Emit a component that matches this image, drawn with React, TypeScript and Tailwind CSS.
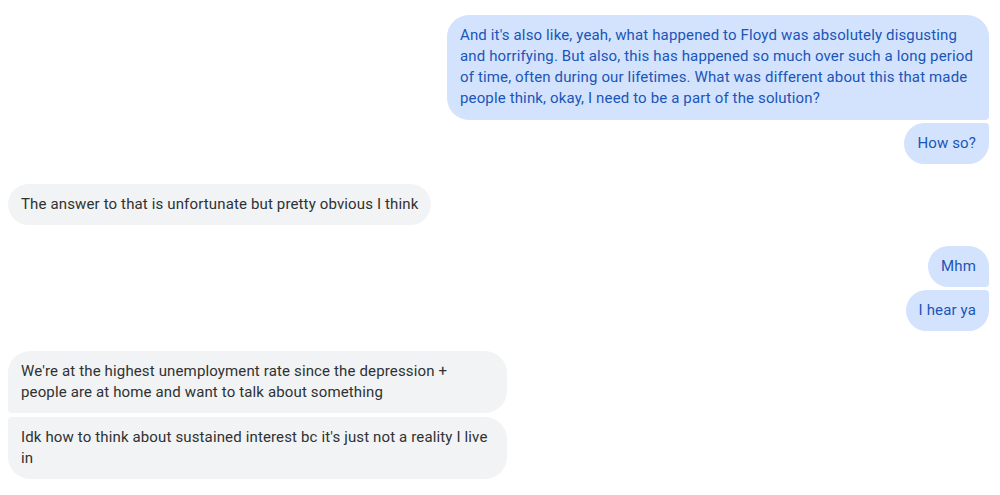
import React from 'react';

type Msg = { text: string; cls: string };

const blue = 'bg-[#d3e3fd] text-[#1a55b8]';
const gray = 'bg-[#f1f3f4] text-[#2f3133]';

const Bubble: React.FC<{ m: Msg; color: string; max: string }> = ({ m, color, max }) => (
    <div className={`w-fit px-[13px] py-[10px] text-[15px] leading-[21px] tracking-[0.14px] ${color} ${max} ${m.cls}`}>
        {m.text}
    </div>
);

const App: React.FC = () => {
    return (
        <div
            className="w-[1000px] h-[495px] bg-white pl-2 pr-[11px] pt-[15px] flex flex-col overflow-hidden"
            style={{ fontFamily: 'Roboto, "Noto Sans", sans-serif' }}
        >
            {/* outgoing group */}
            <div className="flex flex-col items-end gap-[3px]">
                <Bubble
                    color={blue}
                    max="max-w-[542px]"
                    m={{
                        text: "And it's also like, yeah, what happened to Floyd was absolutely disgusting and horrifying. But also, this has happened so much over such a long period of time, often during our lifetimes. What was different about this that made people think, okay, I need to be a part of the solution?",
                        cls: 'rounded-[22px] rounded-br-[4px] pb-[11px]',
                    }}
                />
                <Bubble color={blue} max="" m={{ text: 'How so?', cls: 'rounded-[22px] rounded-tr-[4px]' }} />
            </div>

            {/* incoming */}
            <div className="mt-5 flex flex-col items-start">
                <Bubble
                    color={gray}
                    max=""
                    m={{ text: 'The answer to that is unfortunate but pretty obvious I think', cls: 'rounded-[22px]' }}
                />
            </div>

            <div className="mt-[21px] flex flex-col items-end gap-[3px]">
                <Bubble color={blue} max="" m={{ text: 'Mhm', cls: 'rounded-[22px] rounded-br-[4px]' }} />
                <Bubble color={blue} max="" m={{ text: 'I hear ya', cls: 'rounded-[22px] rounded-tr-[4px]' }} />
            </div>

            <div className="mt-5 flex flex-col items-start gap-1">
                <Bubble
                    color={gray}
                    max="max-w-[499px]"
                    m={{
                        text: "We're at the highest unemployment rate since the depression + people are at home and want to talk about something",
                        cls: 'rounded-[22px] rounded-bl-[4px]',
                    }}
                />
                <Bubble
                    color={gray}
                    max="max-w-[499px]"
                    m={{
                        text: "Idk how to think about sustained interest bc it's just not a reality I live in",
                        cls: 'rounded-[22px] rounded-tl-[4px]',
                    }}
                />
            </div>
        </div>
    );
};

export default App;
